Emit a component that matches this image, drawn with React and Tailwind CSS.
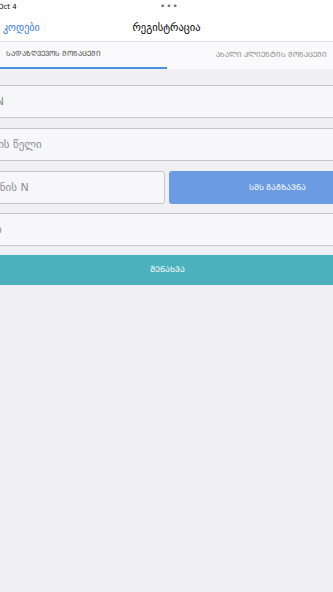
import React from "react";

function Field({ placeholder, className = "" }) {
  return (
    <input
      readOnly
      placeholder={placeholder}
      className={`h-[33px] w-full rounded-[3px] border border-[#c6c6c9] bg-[#f7f6f9] pl-[3px] text-[11px] text-gray-700 outline-none placeholder:text-[#8e8e93] ${className}`}
    />
  );
}

function App() {
  return (
    <div
      className="w-[333px] min-h-[592px] overflow-hidden bg-[#efeff4]"
      style={{ fontFamily: '"DejaVu Sans", "Noto Sans", sans-serif' }}
    >
      {/* status + nav */}
      <div className="bg-white border-b border-[#e2e2e6]">
        <div className="relative h-[14px]">
          <span className="absolute left-[-2px] top-[2px] text-[7px] text-black">Oct 4</span>
          <span className="absolute left-[160px] top-[0px] text-[9px] tracking-[1px] text-[#6e6e73]">•••</span>
        </div>
        <div className="flex h-[27px] items-center">
          <span className="w-[100px] pl-[3px] text-[10px] text-[#3478f6]">კოდები</span>
          <span className="flex-1 text-center text-[10.5px] text-black pr-[100px]">რეგისტრაცია</span>
        </div>
      </div>

      <div className="-ml-[60px] w-[454px]">
        {/* tabs */}
        <div className="flex h-[27px] bg-[#fafafc]">
          <div className="flex w-1/2 shrink-0 items-center justify-center border-b-2 border-[#4a90e2] text-[7.2px] text-[#4a4a4a]">
            ᲡᲐᲓᲐᲖᲦᲕᲔᲕᲝᲡ ᲛᲝᲜᲐᲪᲔᲛᲘ
          </div>
          <div className="flex w-1/2 shrink-0 items-center justify-center pr-[18px] text-[7.2px] text-[#8a8a8a]">
            ᲐᲮᲐᲚᲘ ᲙᲚᲘᲔᲜᲢᲘᲡ ᲛᲝᲜᲐᲪᲔᲛᲘ
          </div>
        </div>

        {/* form */}
        <div className="flex flex-col gap-[10px] px-[8px] pt-[16px]">
          <Field placeholder="პირადი N" />
          <Field placeholder="დაბადების წელი" />
          <div className="grid grid-cols-2 gap-[4px]">
            <Field placeholder="ტელეფონის N" />
            <button className="h-[33px] rounded-[3px] bg-[#6a9be3] text-[8px] text-white">
              ᲡᲛᲡ ᲒᲐᲒᲖᲐᲕᲜᲐ
            </button>
          </div>
          <Field placeholder="სმს კოდი" className="-mt-[1px]" />
          <button className="-mt-[1px] h-[30px] rounded-[2px] bg-[#4bb1bd] text-[8px] text-white">
            ᲨᲔᲜᲐᲮᲕᲐ
          </button>
        </div>
      </div>
    </div>
  );
}

export default App;
